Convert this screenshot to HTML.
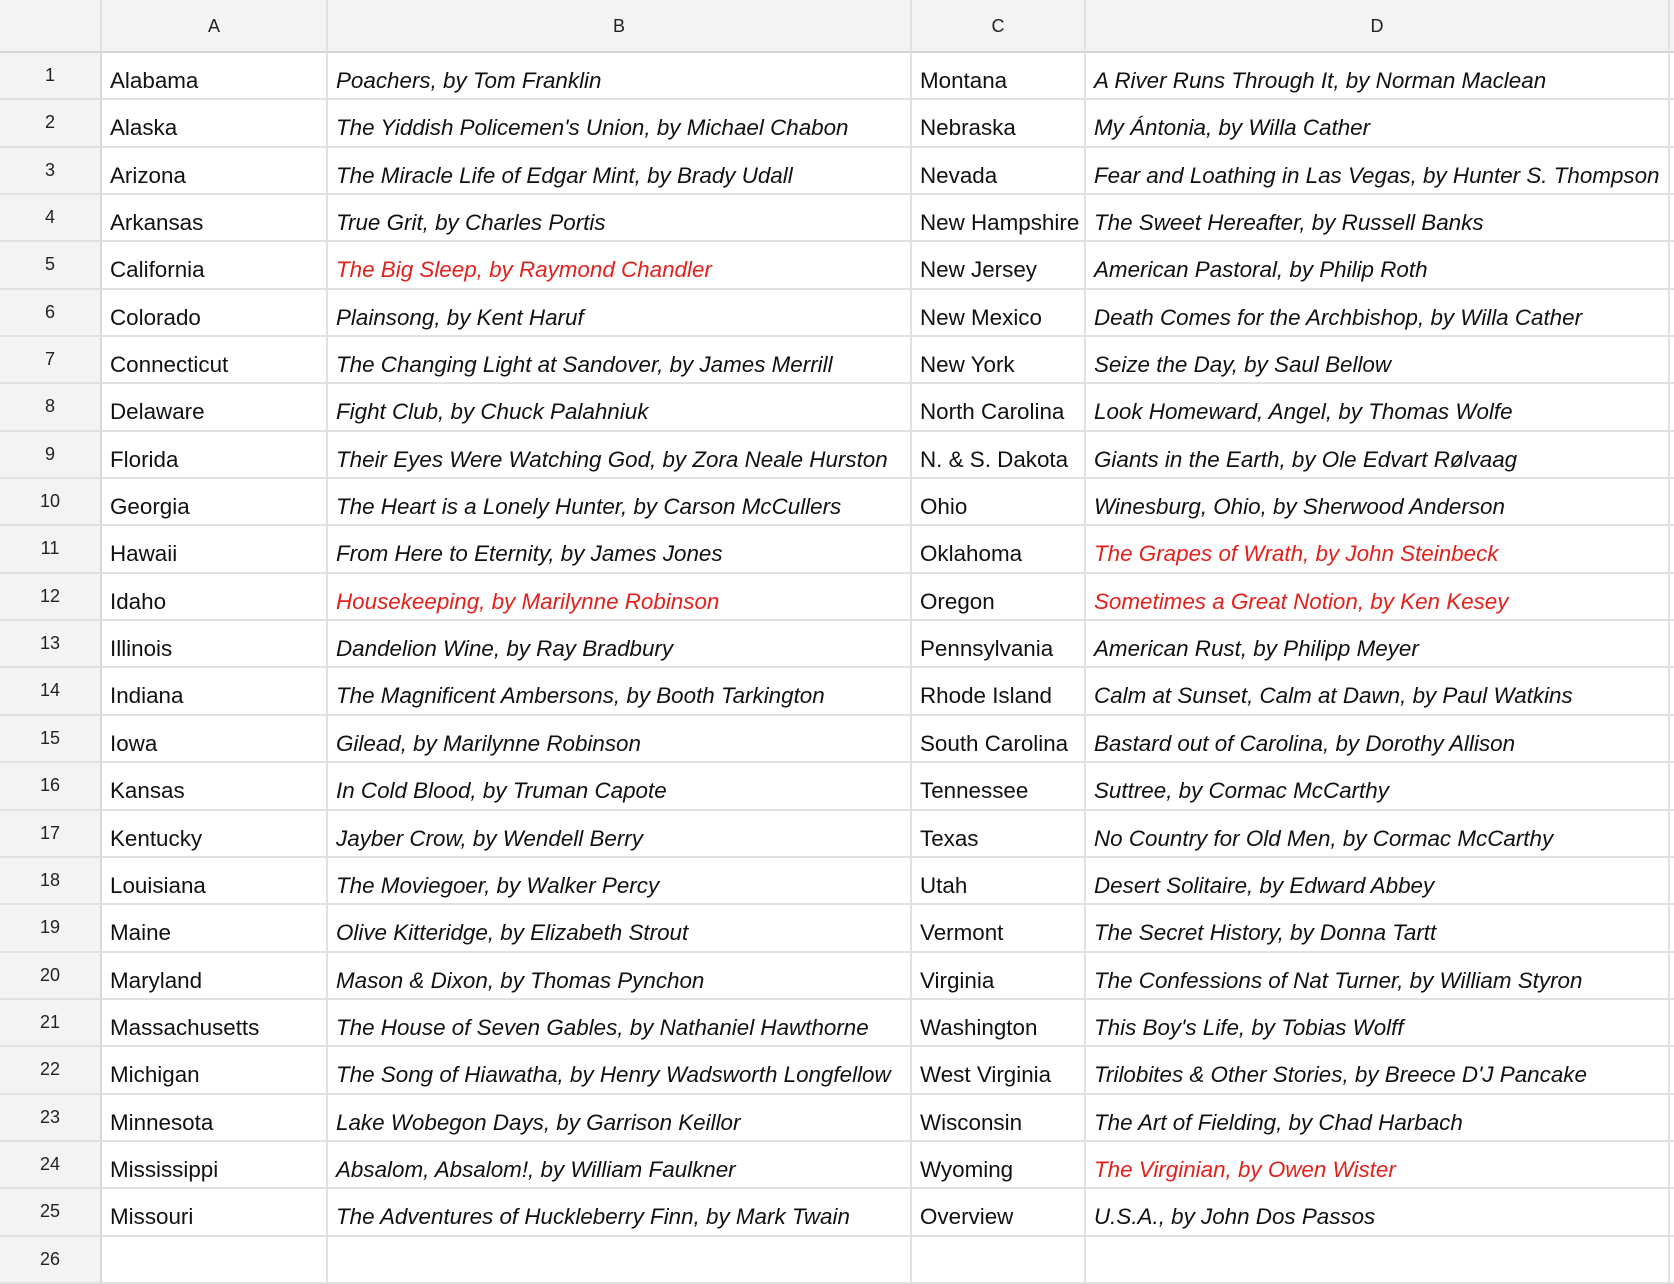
<!DOCTYPE html>
<html><head><meta charset="utf-8"><style>
html,body{margin:0;padding:0;background:#fff;}
body{width:1674px;height:1274px;overflow:hidden;font-family:"Liberation Sans",Arial,sans-serif;}
.g{display:grid;grid-template-columns:102px 226px 584px 174px 584px 4px;grid-template-rows:53px repeat(26,47.35px);}
.g>div{box-sizing:border-box;border-right:2px solid #e1e1e1;border-bottom:2px solid #e1e1e1;white-space:nowrap;overflow:hidden;}
.h{background:#f3f3f3;text-align:center;font-size:18px;padding-top:16px;color:#222;border-bottom:2px solid #d4d4d4!important;}
.n{background:#f3f3f3;text-align:center;font-size:18px;padding-top:12px;color:#222;border-right:2px solid #d8d8d8!important;}
.c{font-size:22.4px;padding:15px 0 0 8px;color:#111;}
.i{font-style:italic;}
.r{color:#e3211c;}
.e{border-right:none!important;}
</style></head><body><div class="g">
<div class="h"></div><div class="h">A</div><div class="h">B</div><div class="h">C</div><div class="h">D</div><div class="h e"></div>
<div class="n">1</div><div class="c">Alabama</div><div class="c i">Poachers, by Tom Franklin</div><div class="c">Montana</div><div class="c i">A River Runs Through It, by Norman Maclean</div><div class="e"></div>
<div class="n">2</div><div class="c">Alaska</div><div class="c i">The Yiddish Policemen's Union, by Michael Chabon</div><div class="c">Nebraska</div><div class="c i">My Ántonia, by Willa Cather</div><div class="e"></div>
<div class="n">3</div><div class="c">Arizona</div><div class="c i">The Miracle Life of Edgar Mint, by Brady Udall</div><div class="c">Nevada</div><div class="c i">Fear and Loathing in Las Vegas, by Hunter S. Thompson</div><div class="e"></div>
<div class="n">4</div><div class="c">Arkansas</div><div class="c i">True Grit, by Charles Portis</div><div class="c">New Hampshire</div><div class="c i">The Sweet Hereafter, by Russell Banks</div><div class="e"></div>
<div class="n">5</div><div class="c">California</div><div class="c i r">The Big Sleep, by Raymond Chandler</div><div class="c">New Jersey</div><div class="c i">American Pastoral, by Philip Roth</div><div class="e"></div>
<div class="n">6</div><div class="c">Colorado</div><div class="c i">Plainsong, by Kent Haruf</div><div class="c">New Mexico</div><div class="c i">Death Comes for the Archbishop, by Willa Cather</div><div class="e"></div>
<div class="n">7</div><div class="c">Connecticut</div><div class="c i">The Changing Light at Sandover, by James Merrill</div><div class="c">New York</div><div class="c i">Seize the Day, by Saul Bellow</div><div class="e"></div>
<div class="n">8</div><div class="c">Delaware</div><div class="c i">Fight Club, by Chuck Palahniuk</div><div class="c">North Carolina</div><div class="c i">Look Homeward, Angel, by Thomas Wolfe</div><div class="e"></div>
<div class="n">9</div><div class="c">Florida</div><div class="c i">Their Eyes Were Watching God, by Zora Neale Hurston</div><div class="c">N. &amp; S. Dakota</div><div class="c i">Giants in the Earth, by Ole Edvart Rølvaag</div><div class="e"></div>
<div class="n">10</div><div class="c">Georgia</div><div class="c i">The Heart is a Lonely Hunter, by Carson McCullers</div><div class="c">Ohio</div><div class="c i">Winesburg, Ohio, by Sherwood Anderson</div><div class="e"></div>
<div class="n">11</div><div class="c">Hawaii</div><div class="c i">From Here to Eternity, by James Jones</div><div class="c">Oklahoma</div><div class="c i r">The Grapes of Wrath, by John Steinbeck</div><div class="e"></div>
<div class="n">12</div><div class="c">Idaho</div><div class="c i r">Housekeeping, by Marilynne Robinson</div><div class="c">Oregon</div><div class="c i r">Sometimes a Great Notion, by Ken Kesey</div><div class="e"></div>
<div class="n">13</div><div class="c">Illinois</div><div class="c i">Dandelion Wine, by Ray Bradbury</div><div class="c">Pennsylvania</div><div class="c i">American Rust, by Philipp Meyer</div><div class="e"></div>
<div class="n">14</div><div class="c">Indiana</div><div class="c i">The Magnificent Ambersons, by Booth Tarkington</div><div class="c">Rhode Island</div><div class="c i">Calm at Sunset, Calm at Dawn, by Paul Watkins</div><div class="e"></div>
<div class="n">15</div><div class="c">Iowa</div><div class="c i">Gilead, by Marilynne Robinson</div><div class="c">South Carolina</div><div class="c i">Bastard out of Carolina, by Dorothy Allison</div><div class="e"></div>
<div class="n">16</div><div class="c">Kansas</div><div class="c i">In Cold Blood, by Truman Capote</div><div class="c">Tennessee</div><div class="c i">Suttree, by Cormac McCarthy</div><div class="e"></div>
<div class="n">17</div><div class="c">Kentucky</div><div class="c i">Jayber Crow, by Wendell Berry</div><div class="c">Texas</div><div class="c i">No Country for Old Men, by Cormac McCarthy</div><div class="e"></div>
<div class="n">18</div><div class="c">Louisiana</div><div class="c i">The Moviegoer, by Walker Percy</div><div class="c">Utah</div><div class="c i">Desert Solitaire, by Edward Abbey</div><div class="e"></div>
<div class="n">19</div><div class="c">Maine</div><div class="c i">Olive Kitteridge, by Elizabeth Strout</div><div class="c">Vermont</div><div class="c i">The Secret History, by Donna Tartt</div><div class="e"></div>
<div class="n">20</div><div class="c">Maryland</div><div class="c i">Mason &amp; Dixon, by Thomas Pynchon</div><div class="c">Virginia</div><div class="c i">The Confessions of Nat Turner, by William Styron</div><div class="e"></div>
<div class="n">21</div><div class="c">Massachusetts</div><div class="c i">The House of Seven Gables, by Nathaniel Hawthorne</div><div class="c">Washington</div><div class="c i">This Boy's Life, by Tobias Wolff</div><div class="e"></div>
<div class="n">22</div><div class="c">Michigan</div><div class="c i">The Song of Hiawatha, by Henry Wadsworth Longfellow</div><div class="c">West Virginia</div><div class="c i">Trilobites &amp; Other Stories, by Breece D'J Pancake</div><div class="e"></div>
<div class="n">23</div><div class="c">Minnesota</div><div class="c i">Lake Wobegon Days, by Garrison Keillor</div><div class="c">Wisconsin</div><div class="c i">The Art of Fielding, by Chad Harbach</div><div class="e"></div>
<div class="n">24</div><div class="c">Mississippi</div><div class="c i">Absalom, Absalom!, by William Faulkner</div><div class="c">Wyoming</div><div class="c i r">The Virginian, by Owen Wister</div><div class="e"></div>
<div class="n">25</div><div class="c">Missouri</div><div class="c i">The Adventures of Huckleberry Finn, by Mark Twain</div><div class="c">Overview</div><div class="c i">U.S.A., by John Dos Passos</div><div class="e"></div>
<div class="n">26</div><div class="c"></div><div class="c"></div><div class="c"></div><div class="c"></div><div class="e"></div>
</div></body></html>
